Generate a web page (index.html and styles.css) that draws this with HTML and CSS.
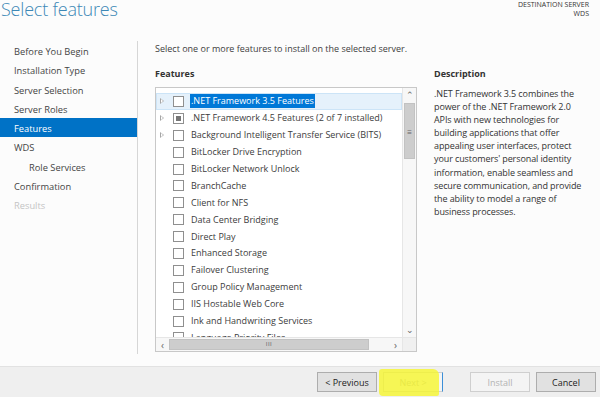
FILE: index.html
```html
<!DOCTYPE html>
<html lang="en">
<head>
    <meta charset="UTF-8">
    <title>Select features</title>
    <link rel="stylesheet" href="styles.css">
</head>
<body>
    <div class="wizard">
        <div class="header">
            <h1 class="title">Select features</h1>
            <div class="dest">
                <div>DESTINATION SERVER</div>
                <div>WDS</div>
            </div>
        </div>

        <div class="main">
            <ul class="nav">
                <li>Before You Begin</li>
                <li>Installation Type</li>
                <li>Server Selection</li>
                <li>Server Roles</li>
                <li class="active">Features</li>
                <li>WDS</li>
                <li class="sub">Role Services</li>
                <li>Confirmation</li>
                <li class="disabled">Results</li>
            </ul>

            <div class="content">
                <p class="intro">Select one or more features to install on the selected server.</p>

                <div class="columns">
                    <div class="features">
                        <h2>Features</h2>
                        <div class="listbox">
                            <div class="rows">
                                <div class="row selected"><span class="exp"></span><span class="chk"></span><span class="label">.NET Framework 3.5 Features</span></div>
                                <div class="row"><span class="exp"></span><span class="chk partial"></span><span class="label">.NET Framework 4.5 Features (2 of 7 installed)</span></div>
                                <div class="row"><span class="exp"></span><span class="chk"></span><span class="label">Background Intelligent Transfer Service (BITS)</span></div>
                                <div class="row"><span class="noexp"></span><span class="chk"></span><span class="label">BitLocker Drive Encryption</span></div>
                                <div class="row"><span class="noexp"></span><span class="chk"></span><span class="label">BitLocker Network Unlock</span></div>
                                <div class="row"><span class="noexp"></span><span class="chk"></span><span class="label">BranchCache</span></div>
                                <div class="row"><span class="noexp"></span><span class="chk"></span><span class="label">Client for NFS</span></div>
                                <div class="row"><span class="noexp"></span><span class="chk"></span><span class="label">Data Center Bridging</span></div>
                                <div class="row"><span class="noexp"></span><span class="chk"></span><span class="label">Direct Play</span></div>
                                <div class="row"><span class="noexp"></span><span class="chk"></span><span class="label">Enhanced Storage</span></div>
                                <div class="row"><span class="noexp"></span><span class="chk"></span><span class="label">Failover Clustering</span></div>
                                <div class="row"><span class="noexp"></span><span class="chk"></span><span class="label">Group Policy Management</span></div>
                                <div class="row"><span class="noexp"></span><span class="chk"></span><span class="label">IIS Hostable Web Core</span></div>
                                <div class="row"><span class="noexp"></span><span class="chk"></span><span class="label">Ink and Handwriting Services</span></div>
                                <div class="row"><span class="noexp"></span><span class="chk"></span><span class="label">Language Priority Files</span></div>
                            </div>
                            <div class="vscroll">
                                <span class="arrow">&#8963;</span>
                                <div class="vthumb">&#8801;</div>
                                <div class="vtrack"></div>
                                <span class="arrow">&#8964;</span>
                            </div>
                            <div class="hscroll">
                                <span class="harrow">&lsaquo;</span>
                                <div class="hthumb">III</div>
                                <div class="htrack"></div>
                                <span class="harrow">&rsaquo;</span>
                            </div>
                            <div class="corner"></div>
                        </div>
                    </div>

                    <div class="description">
                        <h2>Description</h2>
                        <p>.NET Framework 3.5 combines the power of the .NET Framework 2.0 APIs with new technologies for building applications that offer appealing user interfaces, protect your customers' personal identity information, enable seamless and secure communication, and provide the ability to model a range of business processes.</p>
                    </div>
                </div>
            </div>
        </div>

        <div class="footer">
            <button class="btn">&lt; Previous</button>
            <span class="marked">
                <button class="btn focus" disabled>Next &gt;</button>
                <span class="marker"></span>
            </span>
            <button class="btn gap" disabled>Install</button>
            <button class="btn">Cancel</button>
        </div>
    </div>
</body>
</html>
```

FILE: styles.css
```css
body {
    margin: 0;
    font-family: "Open Sans", "Noto Sans", sans-serif;
    font-size: 9px;
    color: #3c3c3c;
    background-color: #fcfcfc;
}
.wizard {
    width: 600px;
    height: 397px;
    display: flex;
    flex-direction: column;
    overflow: hidden;
}
.header {
    height: 41px;
    display: flex;
    justify-content: space-between;
    align-items: flex-start;
}
.title {
    margin: -3px 0 0 1px;
    font-size: 18px;
    font-weight: 300;
    line-height: 24px;
    color: #3d88b6;
    letter-spacing: -0.2px;
}
.dest {
    margin: 0 11px 0 0;
    text-align: right;
    font-size: 7px;
    line-height: 9px;
    color: #333;
}
.main {
    flex: 1;
    display: flex;
}
.nav {
    list-style: none;
    margin: 0 0 12px 0;
    padding: 0;
    width: 137px;
    border-right: 1px solid #d6d6d6;
}
.nav li {
    height: 19.3px;
    line-height: 21px;
    padding-left: 14px;
    font-size: 9.3px;
    color: #444;
}
.nav li.sub {
    padding-left: 29px;
}
.nav li.active {
    background-color: #0072c6;
    color: #fff;
}
.nav li.disabled {
    color: #c4c4c4;
}
.content {
    flex: 1;
    padding-left: 17px;
}
.intro {
    margin: 1px 0 0;
    line-height: 14px;
}
.columns {
    display: flex;
    margin-top: 11px;
}
.features {
    width: 262px;
}
h2 {
    margin: 0 0 6px;
    font-size: 9px;
    font-weight: bold;
    line-height: 14px;
    color: #333;
}
.listbox {
    height: 263px;
    border: 1px solid #c8c8c8;
    background-color: #fff;
    display: grid;
    grid-template-columns: 1fr 14px;
    grid-template-rows: 1fr 14px;
}
.rows {
    padding-top: 5px;
    overflow: hidden;
}
.row {
    height: 16.9px;
    display: flex;
    align-items: center;
    white-space: nowrap;
}
.row.selected {
    background-color: #e5f1fb;
    box-shadow: inset 0 0 0 1px #cce4f7;
}
.exp, .noexp {
    width: 17px;
    height: 7px;
    flex: none;
}
.exp {
    position: relative;
}
.exp::before {
    content: "";
    position: absolute;
    left: 4px;
    top: 0;
    border-left: 4px solid #a6a6a6;
    border-top: 3.5px solid transparent;
    border-bottom: 3.5px solid transparent;
}
.exp::after {
    content: "";
    position: absolute;
    left: 5px;
    top: 1.5px;
    border-left: 2px solid #fff;
    border-top: 2px solid transparent;
    border-bottom: 2px solid transparent;
}
.chk {
    width: 9px;
    height: 9px;
    border: 1px solid #8f8f8f;
    background-color: #fff;
    flex: none;
    margin-right: 6px;
    display: flex;
    align-items: center;
    justify-content: center;
}
.chk.partial::after {
    content: "";
    width: 5px;
    height: 5px;
    background-color: #767676;
}
.label {
    padding: 1px 1px;
    line-height: 12px;
}
.selected .label {
    background-color: #0078d7;
    color: #fff;
}
.vscroll {
    border-left: 1px solid #e6e6e6;
    background-color: #f7f7f7;
    display: flex;
    flex-direction: column;
    align-items: center;
}
.arrow {
    height: 14px;
    line-height: 14px;
    font-size: 9px;
    color: #666;
}
.vthumb {
    width: 11px;
    height: 56px;
    margin-top: 1px;
    background-color: #cdcdcd;
    border: 1px solid #c2c2c2;
    box-sizing: border-box;
    display: flex;
    align-items: center;
    justify-content: center;
    font-size: 8px;
    color: #666;
}
.vtrack {
    flex: 1;
}
.hscroll {
    border-top: 1px solid #e6e6e6;
    background-color: #f7f7f7;
    display: flex;
    align-items: center;
}
.harrow {
    width: 13px;
    text-align: center;
    font-size: 10px;
    line-height: 12px;
    color: #666;
}
.hthumb {
    width: 200px;
    height: 11px;
    background-color: #cdcdcd;
    border: 1px solid #c2c2c2;
    box-sizing: border-box;
    text-align: center;
    font-size: 6px;
    line-height: 9px;
    color: #555;
    letter-spacing: 0.5px;
}
.htrack {
    flex: 1;
}
.corner {
    background-color: #f0f0f0;
    border-top: 1px solid #e6e6e6;
    border-left: 1px solid #e6e6e6;
}
.description {
    margin-left: 17px;
    width: 154px;
}
.description p {
    margin: 0;
    line-height: 13.1px;
    color: #333;
    letter-spacing: -0.1px;
}
.footer {
    height: 30px;
    background-color: #efefef;
    border-top: 1px solid #e2e2e2;
    display: flex;
    align-items: center;
    justify-content: flex-end;
    padding: 0 4px 0 0;
}
.btn {
    width: 60px;
    height: 20px;
    margin-left: 6px;
    padding: 0;
    font-family: inherit;
    font-size: 9px;
    color: #222;
    background-color: #e1e1e1;
    border: 1px solid #adadad;
}
.btn:disabled {
    color: #b3b3b3;
    background-color: #f4f4f4;
    border-color: #cfcfcf;
}
.btn.focus {
    border-right-color: #3c8fd8;
}
.btn.gap {
    margin-left: 27px;
}
.marked {
    position: relative;
    display: flex;
}
.marker {
    position: absolute;
    left: 2px;
    top: -3px;
    width: 60px;
    height: 27px;
    background-color: rgba(246, 246, 40, 0.78);
    border-radius: 3px 6px 2px 4px;
}
```
